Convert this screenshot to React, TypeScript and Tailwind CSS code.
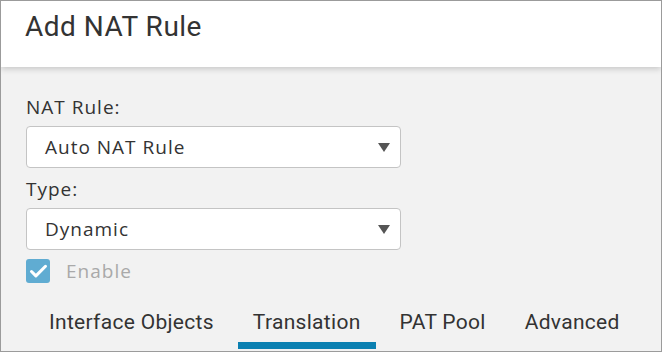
import { Check } from 'lucide-react';

const tabs = ['Interface Objects', 'Translation', 'PAT Pool', 'Advanced'];

function SelectBox({ value }: { value: string }) {
  return (
    <div className="flex items-center justify-between w-[375px] h-[42px] bg-white border border-[#c4c4c4] rounded-[4px] pl-[18px] pr-[10px]">
      <span className="text-[19px] text-[#333] tracking-[1px]">{value}</span>
      <svg width="12" height="9" viewBox="0 0 12 9">
        <path d="M0 0 H12 L6 9 Z" fill="#555" />
      </svg>
    </div>
  );
}

export default function App() {
  return (
    <div
      className="w-[662px] h-[352px] bg-[#f2f2f2] border border-[#9b9b9b] overflow-hidden flex flex-col"
      style={{ fontFamily: '"Open Sans", "Liberation Sans", sans-serif' }}
    >
      <div className="h-[66px] shrink-0 bg-white shadow-[0_2px_6px_rgba(0,0,0,0.18)] px-[24px] pt-[10px] relative z-10">
        <h1
          className="text-[28px] leading-[32px] text-[#333] tracking-[0.5px]"
          style={{ fontFamily: 'Roboto, sans-serif' }}
        >
          Add NAT Rule
        </h1>
      </div>

      <div className="flex-1 flex flex-col px-[25px] pt-[28px]">
        <label className="text-[19px] leading-[24px] text-[#333] tracking-[1px]">NAT Rule:</label>
        <div className="mt-[7px]">
          <SelectBox value="Auto NAT Rule" />
        </div>

        <label className="text-[19px] leading-[24px] text-[#333] tracking-[1px] mt-[9px]">Type:</label>
        <div className="mt-[7px]">
          <SelectBox value="Dynamic" />
        </div>

        <div className="flex items-center mt-[8px] h-[26px]">
          <div className="w-[24px] h-[24px] rounded-[3px] bg-[#60acd2] flex items-center justify-center">
            <Check className="w-[21px] h-[21px] text-white" strokeWidth={3.5} />
          </div>
          <span className="ml-[16px] text-[19px] text-[#a9a9a9] tracking-[1px]">Enable</span>
        </div>

        <div className="flex mt-auto mb-[2px] ml-[8px] gap-[9px]" style={{ fontFamily: 'Roboto, sans-serif' }}>
          {tabs.map((t) => (
            <div
              key={t}
              className={`shrink-0 whitespace-nowrap px-[15px] pb-[8px] text-[21px] leading-[24px] text-[#333] tracking-[0.3px] border-b-[7px] ${
                t === 'Translation' ? 'border-[#0b80b1]' : 'border-transparent'
              }`}
            >
              {t}
            </div>
          ))}
        </div>
      </div>
    </div>
  );
}
